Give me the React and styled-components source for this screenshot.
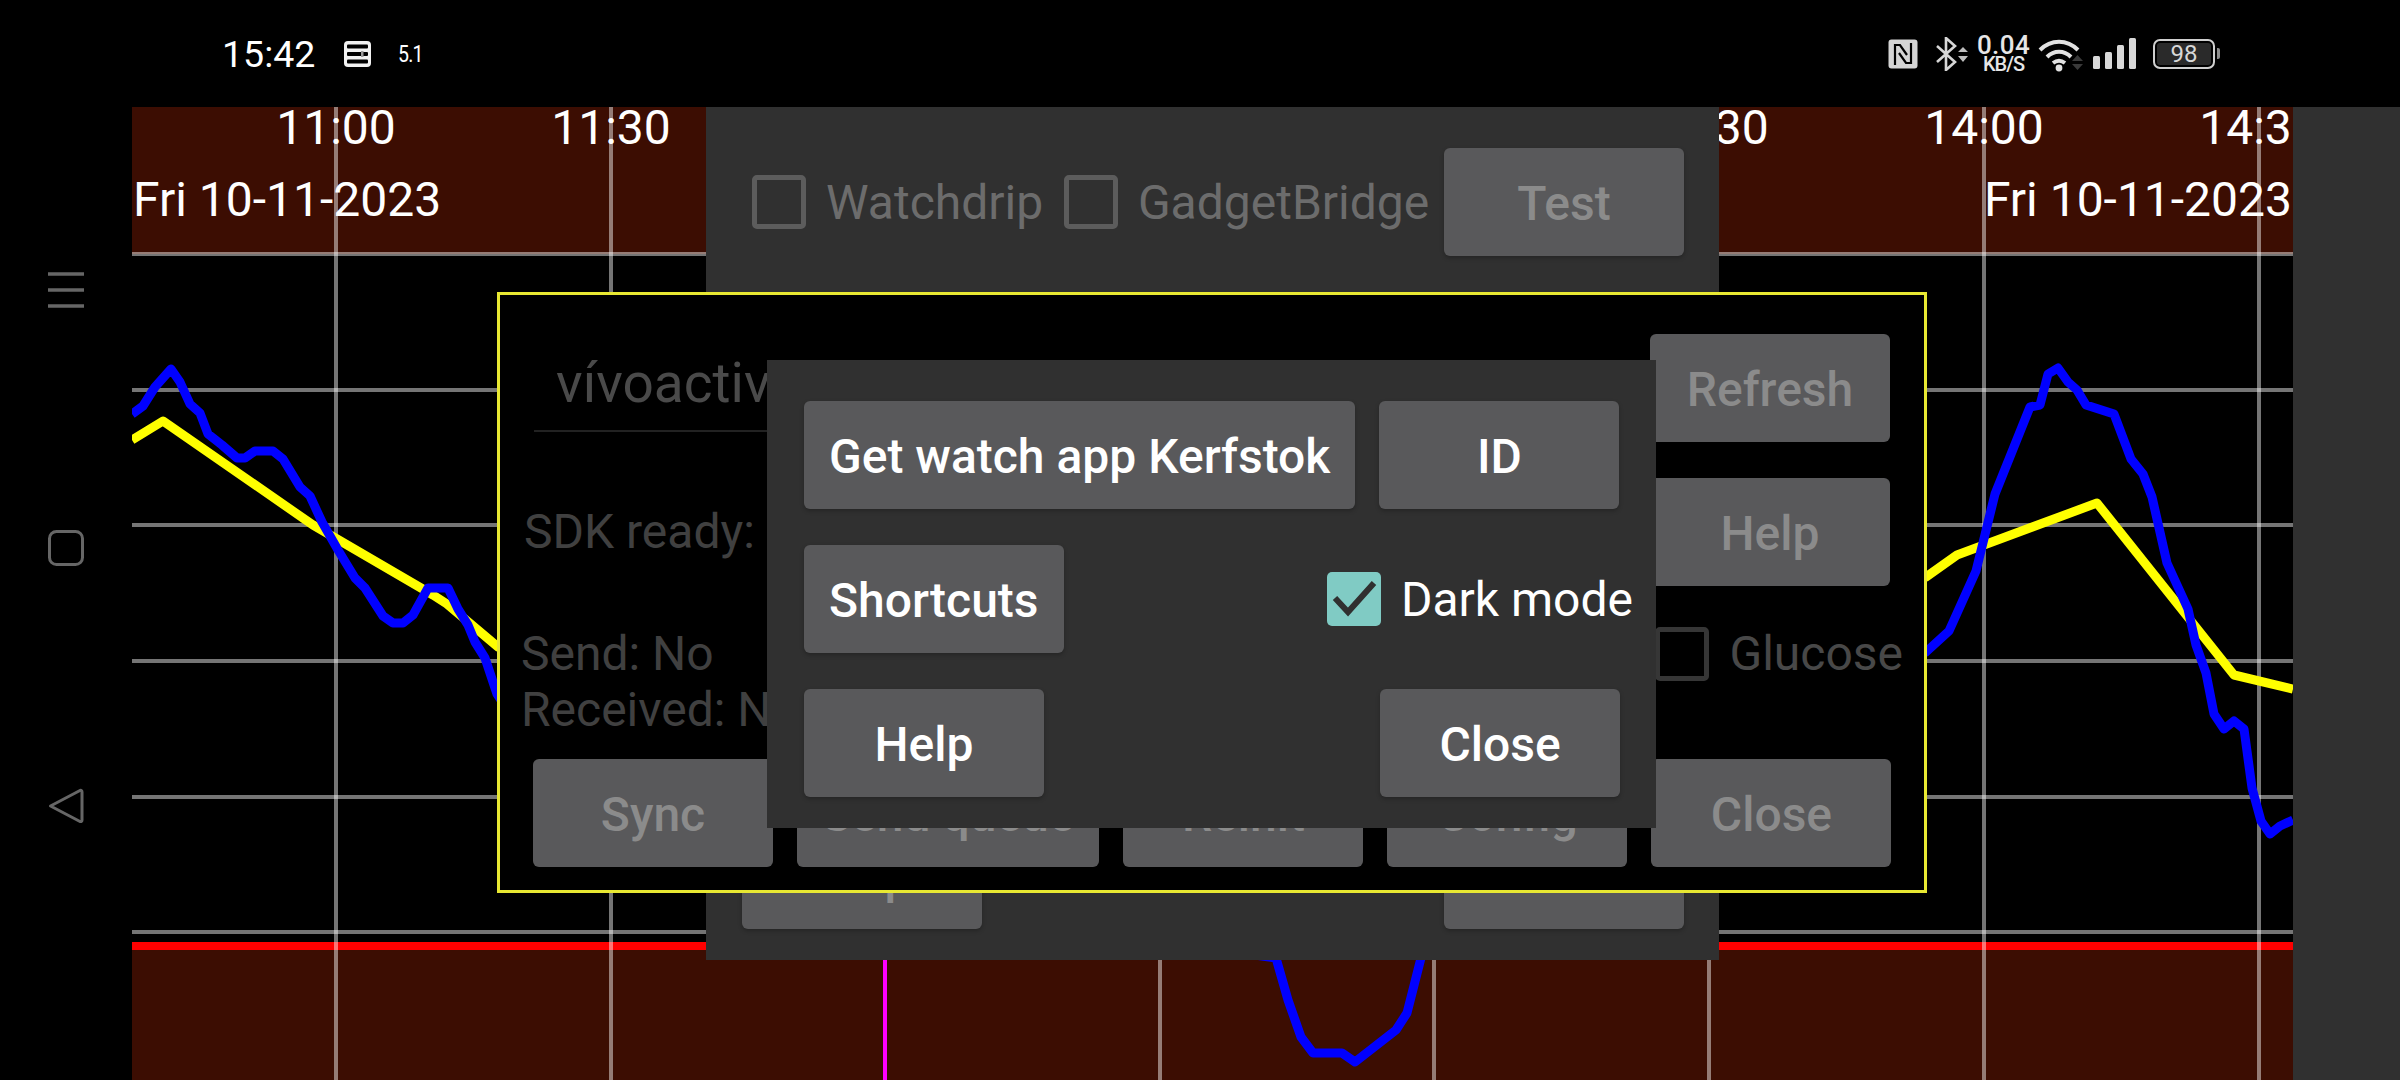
import React from "react";
import styled, { createGlobalStyle } from "styled-components";

const GRID_X = [336, 611, 885, 1160, 1434, 1709, 1984, 2259];
const GRID_Y = [254, 390, 525, 661, 797, 932];
const TIMES = ["11:00", "11:30", "12:00", "12:30", "13:00", "13:30", "14:00", "14:30"];

const BLUE_LINE =
  "132,414 143,406 155,387 171,369 180,382 190,404 200,413 208,434 222,445 237,458 245,458 255,451 273,451 283,459 300,487 310,496 322,522 338,550 355,578 365,588 383,616 393,623 403,623 413,615 428,588 448,588 458,609 468,625 475,642 485,658 497,694 600,850 720,880 1276,958 1288,1000 1301,1037 1313,1053 1342,1053 1355,1062 1396,1030 1407,1013 1421,958 1500,870 1926,652 1949,631 1976,571 1995,494 2030,407 2040,405 2048,374 2058,368 2068,382 2077,390 2086,405 2114,414 2131,459 2143,474 2152,497 2167,563 2188,609 2196,645 2206,673 2214,714 2224,729 2234,721 2244,729 2252,788 2261,821 2270,834 2280,826 2293,820";
const YELLOW_LINE =
  "132,440 163,421 313,525 433,595 447,604 498,647 1000,700 1926,577 1957,555 2097,503 2234,675 2293,689";

const GlobalStyle = createGlobalStyle`
  html,
  body {
    margin: 0;
    background: #000;
    font-family: Roboto, "Liberation Sans", sans-serif;
  }
`;

const Screen = styled.div`
  width: 2400px;
  height: 1080px;
  display: flex;
  flex-direction: column;
  overflow: hidden;
  background: #000;
`;

const StatusBar = styled.header`
  height: 107px;
  flex: none;
  display: flex;
  align-items: center;
  justify-content: space-between;
  padding: 0 185px 0 222px;
  color: #fff;
`;

const StatusGroup = styled.div`
  display: flex;
  align-items: center;
`;

const Clock = styled.span`
  font-size: 37.5px;
  width: 122px;
`;

const NetSpeed = styled.span`
  font-size: 23px;
  letter-spacing: -1px;
  margin-left: 27px;
  margin-top: 2px;
  transform: scaleX(0.85);
  transform-origin: left center;
`;

const Rate = styled.div`
  width: 51px;
  margin: 0 9px 0 10px;
  display: flex;
  flex-direction: column;
  align-items: center;
  color: #e6e6e6;
  font-weight: 500;
  line-height: 1;
`;

const RateValue = styled.span`
  font-size: 26px;
  letter-spacing: 0.4px;
  line-height: 20px;
`;

const RateUnit = styled.span`
  font-size: 20px;
  letter-spacing: -1px;
  line-height: 18px;
`;

const Battery = styled.div`
  position: relative;
  box-sizing: border-box;
  width: 62px;
  height: 30px;
  margin-left: 17px;
  display: flex;
  align-items: center;
  justify-content: center;
  border: 2px solid #cfcfcf;
  border-radius: 7px;
  background: #2a2a2a;
  box-shadow: inset 0 0 0 2px #000;
  color: #d8d8d8;
  font-size: 24px;

  &::after {
    content: "";
    position: absolute;
    right: -7px;
    top: 7px;
    width: 3px;
    height: 11px;
    border-radius: 0 2px 2px 0;
    background: #8c8c8c;
  }
`;

const Body = styled.main`
  flex: 1;
  display: flex;
  min-height: 0;
`;

const NavRail = styled.nav`
  width: 132px;
  flex: none;
  padding-top: 54px;
  display: flex;
  flex-direction: column;
`;

const NavSlot = styled.div`
  height: 258px;
  display: flex;
  align-items: center;
  justify-content: center;
`;

const ChartPane = styled.section`
  position: relative;
  flex: 1;
  overflow: hidden;
`;

const ChartSvg = styled.svg`
  display: block;
  width: 2161px;
  height: 973px;
`;

const SidePanel = styled.aside`
  width: 107px;
  flex: none;
  background: #303030;
`;

const BackDialog = styled.div`
  position: absolute;
  left: 574px;
  top: 0;
  box-sizing: border-box;
  width: 1013px;
  height: 853px;
  padding: 41px 35px 31px 36px;
  display: flex;
  flex-direction: column;
  justify-content: space-between;
  background: #303030;
`;

const WatchDialog = styled.div`
  position: absolute;
  left: 365px;
  top: 185px;
  box-sizing: border-box;
  width: 1430px;
  height: 601px;
  padding: 39px 34px 23px 33px;
  display: flex;
  flex-direction: column;
  border: 3px solid #e8e832;
  background: #000;
`;

const FrontDialog = styled.div`
  position: absolute;
  left: 635px;
  top: 253px;
  box-sizing: border-box;
  width: 889px;
  height: 468px;
  padding: 41px 36px 31px 37px;
  display: flex;
  flex-direction: column;
  gap: 36px;
  background: #303030;
`;

const Row = styled.div`
  display: flex;
  align-items: ${(p) => p.$align || "center"};
  justify-content: ${(p) => p.$justify || "space-between"};
  gap: ${(p) => p.$gap || 0}px;
  margin-top: ${(p) => p.$top || 0}px;
  height: ${(p) => (p.$height ? `${p.$height}px` : "auto")};
`;

const Button = styled.div`
  box-sizing: border-box;
  height: 108px;
  min-width: 240px;
  padding: 2px 25px 0;
  display: flex;
  align-items: center;
  justify-content: center;
  flex: none;
  border-radius: 6px;
  background: #59595b;
  box-shadow: 0 2px 4px rgba(0, 0, 0, 0.25);
  color: ${(p) => (p.$dim ? "#8b8b8b" : "#fff")};
  font-size: 48px;
  font-weight: 500;
  white-space: nowrap;
`;

const Box = styled.span`
  box-sizing: border-box;
  width: 54px;
  height: 54px;
  flex: none;
  display: flex;
  align-items: center;
  justify-content: center;
  border-radius: 5px;
  border: ${(p) => (p.$checked ? "none" : `5px solid ${p.$tone}`)};
  background: ${(p) => (p.$checked ? "#80cbc4" : "transparent")};
`;

const CheckRow = styled.div`
  display: flex;
  align-items: center;
  gap: 20px;
  margin: ${(p) => p.$margin || 0};
  color: ${(p) => p.$color};
  font-size: 48px;
  white-space: nowrap;
`;

const DeviceField = styled.div`
  width: 560px;
  height: 98px;
  margin-left: 1px;
  align-self: flex-start;
  padding: 2px 0 0 22px;
  box-sizing: border-box;
  display: flex;
  align-items: center;
  border-bottom: 2px solid #222;
  color: #4a4a4a;
  font-size: 55px;
  white-space: nowrap;
`;

const InfoText = styled.div`
  margin-left: ${(p) => p.$left || 0}px;
  color: #404040;
  font-size: 48px;
  line-height: 56px;
  white-space: nowrap;
`;

const AxisLabel = styled.text`
  fill: #fff;
  font-family: Roboto, "Liberation Sans", sans-serif;
  font-size: 48px;
`;

const NfcIcon = () => (
  <svg width="30" height="30" viewBox="0 0 30 30" style={{ marginRight: 18 }}>
    <rect x="0.5" y="0.5" width="29" height="29" rx="3" fill="#d4d4d4" />
    <path d="M7 26V6h5l7 10M23 4v20h-5l-7-10" fill="none" stroke="#000" strokeWidth="2.2" />
  </svg>
);

const BluetoothIcon = () => (
  <svg width="32" height="34" viewBox="0 0 32 34">
    <path d="M1 9l18 16-9 8V1l9 8L1 25" fill="none" stroke="#d6d6d6" strokeWidth="2.6" />
    <path d="M22 15l5-5 5 5zM22 19l5 6 5-6z" fill="#bdbdbd" />
  </svg>
);

const WifiIcon = () => (
  <svg width="46" height="36" viewBox="0 0 46 36">
    <g fill="none" stroke="#e2e2e2" strokeWidth="4">
      <path d="M2 14c11-11 27-11 38 0" />
      <path d="M9 21c7-7 17-7 24 0" />
      <path d="M15 27c4-3 8-3 12 0" />
    </g>
    <circle cx="21" cy="32" r="3.4" fill="#e2e2e2" />
    <path d="M34 25l5.500-6 5.500 6zM34 28l5.500 6 5.500-6z" fill="#3a3a3a" />
  </svg>
);

const SignalIcon = () => (
  <svg width="43" height="31" viewBox="0 0 43 31" style={{ marginLeft: 9 }}>
    <g fill="#d8d8d8">
      <rect x="0" y="18" width="7" height="13" rx="1.500" />
      <rect x="12" y="14" width="7" height="17" rx="1.500" />
      <rect x="24" y="7" width="7" height="24" rx="1.500" />
      <rect x="36" y="0" width="7" height="31" rx="1.500" />
    </g>
  </svg>
);

const NotesIcon = () => (
  <svg width="27" height="26" viewBox="0 0 27 26">
    <rect width="27" height="26" rx="4" fill="#f2f2f2" />
    <g fill="#000">
      <rect x="3" y="3.500" width="21" height="4" rx="1" />
      <rect x="3" y="11" width="21" height="4" rx="1" />
      <rect x="3" y="18.500" width="21" height="4" rx="1" />
    </g>
    <rect x="17" y="10" width="2.500" height="6" fill="#999" />
  </svg>
);

const MenuIcon = () => (
  <svg width="36" height="36" viewBox="0 0 36 36">
    <path d="M0 2h36M0 18h36M0 34h36" stroke="#666" strokeWidth="3.500" />
  </svg>
);

const HomeIcon = () => (
  <svg width="36" height="36" viewBox="0 0 36 36">
    <rect x="1.500" y="1.500" width="33" height="33" rx="7" fill="none" stroke="#666" strokeWidth="3" />
  </svg>
);

const BackIcon = () => (
  <svg width="36" height="36" viewBox="0 0 36 36">
    <path
      d="M2.500 18L32 2.500q2-.6 2 1.500v28q0 2-2 1.500z"
      fill="none"
      stroke="#666"
      strokeWidth="3"
      strokeLinejoin="round"
    />
  </svg>
);

const CheckMark = () => (
  <svg width="54" height="54" viewBox="0 0 54 54">
    <path d="M8 26l13 14L47 11" fill="none" stroke="#303030" strokeWidth="6" />
  </svg>
);

const Chart = () => (
  <ChartSvg viewBox="132 107 2161 973">
    <rect x="132" y="107" width="2161" height="147" fill="#3c0d02" />
    <rect x="132" y="949" width="2161" height="131" fill="#3c0d02" />
    <rect x="132" y="942" width="2161" height="8" fill="#f00" />
    {GRID_Y.map((y) => (
      <line key={y} x1="132" x2="2293" y1={y} y2={y} stroke="rgba(255,255,255,0.46)" strokeWidth="4" />
    ))}
    {GRID_X.map((x) => (
      <line
        key={x}
        x1={x}
        x2={x}
        y1="107"
        y2="1080"
        stroke={x === 885 ? "#f0f" : "rgba(255,255,255,0.46)"}
        strokeWidth="4"
      />
    ))}
    <polyline points={YELLOW_LINE} fill="none" stroke="#ff0" strokeWidth="9" strokeLinejoin="round" />
    <polyline points={BLUE_LINE} fill="none" stroke="#00f" strokeWidth="9" strokeLinejoin="round" />
    {TIMES.map((t, i) => (
      <AxisLabel key={t} x={GRID_X[i]} y="144" textAnchor="middle">
        {t}
      </AxisLabel>
    ))}
    <AxisLabel x="133" y="216">
      Fri 10-11-2023
    </AxisLabel>
    <AxisLabel x="2292" y="216" textAnchor="end">
      Fri 10-11-2023
    </AxisLabel>
  </ChartSvg>
);

const App = () => {
  return (
    <Screen>
      <GlobalStyle />
      <StatusBar>
        <StatusGroup>
          <Clock>15:42</Clock>
          <NotesIcon />
          <NetSpeed>5.1</NetSpeed>
        </StatusGroup>
        <StatusGroup>
          <NfcIcon />
          <BluetoothIcon />
          <Rate>
            <RateValue>0.04</RateValue>
            <RateUnit>KB/S</RateUnit>
          </Rate>
          <WifiIcon />
          <SignalIcon />
          <Battery>98</Battery>
        </StatusGroup>
      </StatusBar>

      <Body>
        <NavRail>
          <NavSlot>
            <MenuIcon />
          </NavSlot>
          <NavSlot>
            <HomeIcon />
          </NavSlot>
          <NavSlot>
            <BackIcon />
          </NavSlot>
        </NavRail>

        <ChartPane>
          <Chart />

          <BackDialog>
            <Row>
              <CheckRow $color="#6c6c6c" $margin="0 0 0 10px">
                <Box $tone="#5c5c5c" />
                Watchdrip
              </CheckRow>
              <CheckRow $color="#6c6c6c" $margin="0 9px 0 15px">
                <Box $tone="#5c5c5c" />
                GadgetBridge
              </CheckRow>
              <Button $dim>Test</Button>
            </Row>
            <Row>
              <Button $dim>Help</Button>
              <Button $dim>Close</Button>
            </Row>
          </BackDialog>

          <WatchDialog>
            <Row $align="flex-start">
              <DeviceField>vívoactive 4</DeviceField>
              <Button $dim>Refresh</Button>
            </Row>
            <Row $top={36}>
              <InfoText $left={-9}>SDK ready:</InfoText>
              <Button $dim>Help</Button>
            </Row>
            <Row $height={173} $align="flex-start">
              <InfoText $left={-12}>
                <div style={{ height: 40 }} />
                Send: No
                <br />
                Received: No
              </InfoText>
              <CheckRow $color="#484848" $margin="39px -13px 0 0">
                <Box $tone="#363636" />
                Glucose
              </CheckRow>
            </Row>
            <Row $gap={24} $justify="flex-start">
              <Button $dim>Sync</Button>
              <Button $dim>Send queue</Button>
              <Button $dim>Reinit</Button>
              <Button $dim>Config</Button>
              <Button $dim>Close</Button>
            </Row>
          </WatchDialog>

          <FrontDialog>
            <Row $gap={24} $justify="flex-start">
              <Button>Get watch app Kerfstok</Button>
              <Button>ID</Button>
            </Row>
            <Row>
              <Button>Shortcuts</Button>
              <CheckRow $color="#fff" $margin="0 -13px 0 0">
                <Box $checked>
                  <CheckMark />
                </Box>
                Dark mode
              </CheckRow>
            </Row>
            <Row>
              <Button>Help</Button>
              <Button>Close</Button>
            </Row>
          </FrontDialog>
        </ChartPane>

        <SidePanel />
      </Body>
    </Screen>
  );
};

export default App;
